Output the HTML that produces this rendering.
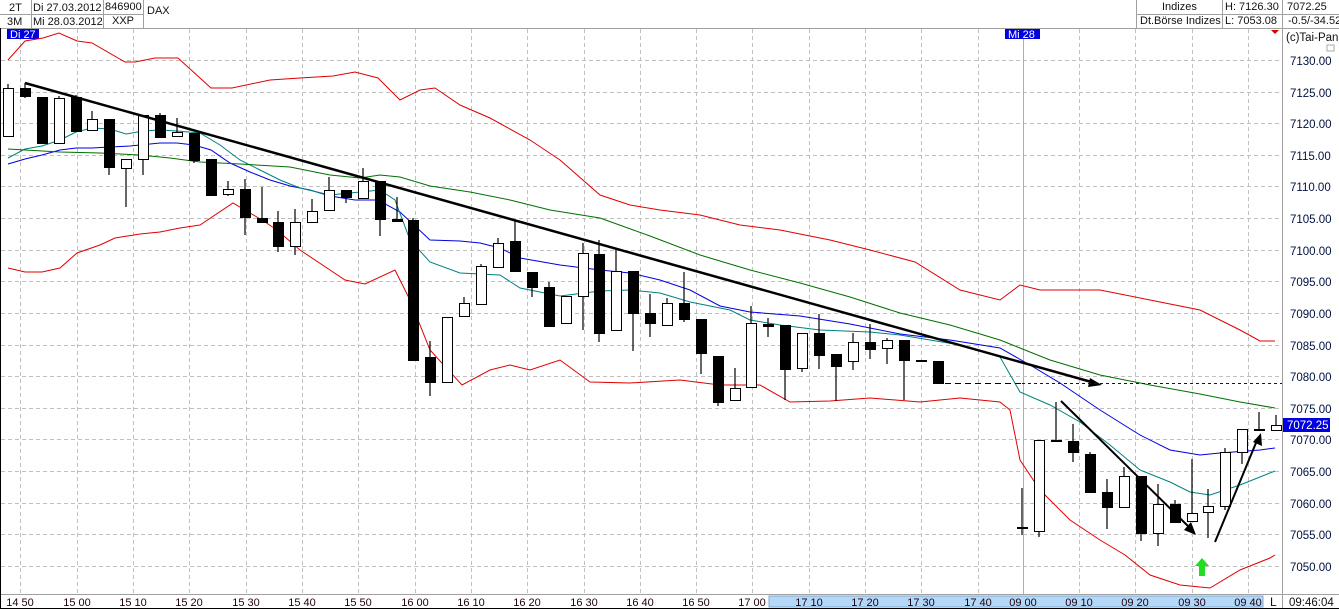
<!DOCTYPE html>
<html><head><meta charset="utf-8"><style>
body{margin:0;width:1339px;height:609px;overflow:hidden;background:#fff;font-family:"Liberation Sans",sans-serif}
svg{display:block}
text{font-family:"Liberation Sans",sans-serif}
</style></head><body>
<svg width="1339" height="609" viewBox="0 0 1339 609" xmlns="http://www.w3.org/2000/svg">
<rect width="1339" height="609" fill="#fff"/>
<g stroke="#a0a0a0" stroke-width="1" fill="none">
<line x1="0" y1="28.5" x2="1339" y2="28.5"/>
<line x1="0" y1="14.5" x2="143" y2="14.5"/>
<line x1="1136" y1="14.5" x2="1339" y2="14.5"/>
<line x1="31.5" y1="0" x2="31.5" y2="28"/>
<line x1="103.5" y1="0" x2="103.5" y2="28"/>
<line x1="143.5" y1="0" x2="143.5" y2="28"/>
<line x1="1136.5" y1="0" x2="1136.5" y2="28"/>
<line x1="1222.5" y1="0" x2="1222.5" y2="28"/>
<line x1="1282.5" y1="0" x2="1282.5" y2="609"/>
<line x1="0" y1="594.5" x2="1339" y2="594.5"/>
</g>
<line x1="0.5" y1="28" x2="0.5" y2="609" stroke="#000"/>
<line x1="0" y1="608.5" x2="1339" y2="608.5" stroke="#000"/>
<g font-size="11" fill="#111">
<text x="9" y="11">2T</text><text x="7" y="25">3M</text>
<text x="33" y="11">Di 27.03.2012</text><text x="33" y="25">Mi 28.03.2012</text>
<text x="105" y="10">846900</text><text x="112" y="24">XXP</text>
<text x="147" y="14">DAX</text>
<text x="1162" y="10">Indizes</text><text x="1140" y="24">Dt.Börse Indizes</text>
<text x="1225" y="10">H: 7126.30</text><text x="1225" y="24">L: 7053.08</text>
<text x="1287" y="10">7072.25</text><text x="1288" y="24">-0.5/-34.52</text>
</g>
<g stroke="#c0c0c0" stroke-dasharray="4,3" stroke-width="1">
<line x1="1" y1="60.5" x2="1282" y2="60.5"/><line x1="1" y1="92.5" x2="1282" y2="92.5"/><line x1="1" y1="123.5" x2="1282" y2="123.5"/><line x1="1" y1="155.5" x2="1282" y2="155.5"/><line x1="1" y1="186.5" x2="1282" y2="186.5"/><line x1="1" y1="218.5" x2="1282" y2="218.5"/><line x1="1" y1="250.5" x2="1282" y2="250.5"/><line x1="1" y1="281.5" x2="1282" y2="281.5"/><line x1="1" y1="313.5" x2="1282" y2="313.5"/><line x1="1" y1="345.5" x2="1282" y2="345.5"/><line x1="1" y1="376.5" x2="1282" y2="376.5"/><line x1="1" y1="408.5" x2="1282" y2="408.5"/><line x1="1" y1="439.5" x2="1282" y2="439.5"/><line x1="1" y1="471.5" x2="1282" y2="471.5"/><line x1="1" y1="503.5" x2="1282" y2="503.5"/><line x1="1" y1="534.5" x2="1282" y2="534.5"/><line x1="1" y1="566.5" x2="1282" y2="566.5"/>
<line x1="20.5" y1="29" x2="20.5" y2="594"/><line x1="77.5" y1="29" x2="77.5" y2="594"/><line x1="133.5" y1="29" x2="133.5" y2="594"/><line x1="189.5" y1="29" x2="189.5" y2="594"/><line x1="246.5" y1="29" x2="246.5" y2="594"/><line x1="302.5" y1="29" x2="302.5" y2="594"/><line x1="358.5" y1="29" x2="358.5" y2="594"/><line x1="415.5" y1="29" x2="415.5" y2="594"/><line x1="471.5" y1="29" x2="471.5" y2="594"/><line x1="527.5" y1="29" x2="527.5" y2="594"/><line x1="584.5" y1="29" x2="584.5" y2="594"/><line x1="640.5" y1="29" x2="640.5" y2="594"/><line x1="696.5" y1="29" x2="696.5" y2="594"/><line x1="752.5" y1="29" x2="752.5" y2="594"/><line x1="809.5" y1="29" x2="809.5" y2="594"/><line x1="865.5" y1="29" x2="865.5" y2="594"/><line x1="921.5" y1="29" x2="921.5" y2="594"/><line x1="978.5" y1="29" x2="978.5" y2="594"/><line x1="1079.5" y1="29" x2="1079.5" y2="594"/><line x1="1135.5" y1="29" x2="1135.5" y2="594"/><line x1="1192.5" y1="29" x2="1192.5" y2="594"/><line x1="1248.5" y1="29" x2="1248.5" y2="594"/>
</g>
<line x1="1023.5" y1="29" x2="1023.5" y2="594" stroke="#b0b0b0"/>
<rect x="7" y="29" width="32" height="10" fill="#0000e0"/><text x="10" y="38" font-size="11" fill="#fff">Di 27</text>
<rect x="1005" y="29" width="35" height="10" fill="#0000e0"/><text x="1008" y="38" font-size="11" fill="#fff">Mi 28</text>
<polygon points="1271,30 1279,30 1275,34" fill="#d00"/>
<g fill="none" stroke-width="1">
<polyline stroke="#e00000" points="8,60 25,41 43,38 59,33 77,41 92,43 125,62 135,62 155,58 178,58 211,88 232,88 270,80 300,78 333,76 355,72 378,78 400,100 420,90 435,88 460,105 490,118 530,140 560,160 600,195 630,205 660,210 700,215 740,225 780,230 830,240 870,250 915,262 960,290 1000,300 1020,285 1040,290 1100,290 1150,300 1200,310 1240,330 1260,341 1275,341"/>
<polyline stroke="#e00000" points="8,268 25,272 42,272 60,268 77,253 100,245 115,238 140,234 160,232 180,228 200,225 233,203 262,220 277,230 300,250 330,270 345,280 365,284 395,270 410,300 430,350 462,385 490,370 510,365 530,370 560,360 590,382 630,383 680,380 720,385 760,385 790,402 830,401 870,398 920,402 960,398 1000,402 1010,410 1020,460 1040,490 1070,520 1100,540 1125,555 1150,575 1180,585 1210,588 1240,570 1270,558 1275,555"/>
<polyline stroke="#0000e0" points="8,164 25,159 42,155 60,150 76,148 92,148 110,147 130,146 160,143 177,143 194,145 211,150 230,163 250,172 270,180 290,186 310,190 330,196 355,200 378,200 400,212 430,240 460,241 480,243 500,248 520,258 560,265 600,270 630,273 660,280 690,290 720,306 750,312 800,316 850,324 900,334 950,340 1000,348 1030,365 1060,383 1100,410 1140,435 1170,450 1200,455 1220,453 1260,450 1275,448"/>
<polyline stroke="#008080" points="8,158 25,149 42,146 60,140 76,132 92,128 110,129 126,134 143,131 160,130 177,131 200,133 220,145 240,160 260,170 280,180 300,188 330,195 360,192 380,190 395,200 410,240 430,262 460,273 500,275 520,288 560,296 600,291 630,290 660,293 690,302 730,310 750,320 780,325 820,330 870,332 900,335 930,340 960,345 1000,357 1020,392 1050,405 1080,422 1110,445 1140,470 1170,482 1190,492 1210,495 1240,485 1275,471"/>
<polyline stroke="#007000" points="8,149 25,150 60,152 100,153 140,155 170,158 200,162 240,164 290,167 330,175 360,178 380,175 400,177 430,186 470,192 510,200 550,210 600,218 650,236 700,255 750,270 800,283 850,297 900,313 950,325 1000,340 1050,360 1100,375 1150,385 1200,394 1240,402 1275,408"/>
</g>
<g stroke="#000" stroke-width="1.2">
<line x1="8" y1="84" x2="8" y2="137"/><line x1="25" y1="83" x2="25" y2="98"/><line x1="42" y1="97" x2="42" y2="143"/><line x1="59" y1="96" x2="59" y2="144"/><line x1="76" y1="95" x2="76" y2="131"/><line x1="92" y1="111" x2="92" y2="130"/><line x1="109" y1="119" x2="109" y2="175"/><line x1="126" y1="159" x2="126" y2="207"/><line x1="143" y1="115" x2="143" y2="175"/><line x1="160" y1="113" x2="160" y2="137"/><line x1="177" y1="118" x2="177" y2="136"/><line x1="194" y1="133" x2="194" y2="163"/><line x1="211" y1="159" x2="211" y2="195"/><line x1="228" y1="181" x2="228" y2="196"/><line x1="245" y1="179" x2="245" y2="235"/><line x1="262" y1="187" x2="262" y2="222"/><line x1="278" y1="211" x2="278" y2="252"/><line x1="295" y1="209" x2="295" y2="255"/><line x1="312" y1="199" x2="312" y2="223"/><line x1="329" y1="177" x2="329" y2="210"/><line x1="346" y1="190" x2="346" y2="203"/><line x1="363" y1="168" x2="363" y2="198"/><line x1="380" y1="181" x2="380" y2="236"/><line x1="397" y1="197" x2="397" y2="221"/><line x1="413" y1="218" x2="413" y2="360"/><line x1="430" y1="341" x2="430" y2="396"/><line x1="447" y1="317" x2="447" y2="382"/><line x1="464" y1="297" x2="464" y2="316"/><line x1="481" y1="264" x2="481" y2="304"/><line x1="498" y1="238" x2="498" y2="268"/><line x1="515" y1="221" x2="515" y2="271"/><line x1="532" y1="272" x2="532" y2="297"/><line x1="549" y1="282" x2="549" y2="326"/><line x1="566" y1="296" x2="566" y2="323"/><line x1="583" y1="243" x2="583" y2="330"/><line x1="599" y1="240" x2="599" y2="342"/><line x1="616" y1="248" x2="616" y2="330"/><line x1="633" y1="271" x2="633" y2="351"/><line x1="650" y1="294" x2="650" y2="337"/><line x1="667" y1="298" x2="667" y2="325"/><line x1="684" y1="272" x2="684" y2="322"/><line x1="701" y1="319" x2="701" y2="374"/><line x1="718" y1="356" x2="718" y2="406"/><line x1="735" y1="368" x2="735" y2="400"/><line x1="751" y1="306" x2="751" y2="387"/><line x1="768" y1="318" x2="768" y2="337"/><line x1="785" y1="325" x2="785" y2="400"/><line x1="802" y1="333" x2="802" y2="372"/><line x1="819" y1="314" x2="819" y2="369"/><line x1="836" y1="354" x2="836" y2="401"/><line x1="853" y1="333" x2="853" y2="370"/><line x1="870" y1="324" x2="870" y2="359"/><line x1="887" y1="338" x2="887" y2="364"/><line x1="904" y1="340" x2="904" y2="400"/><line x1="938" y1="361" x2="938" y2="383"/>
<line x1="1022" y1="488" x2="1022" y2="535"/><line x1="1039" y1="440" x2="1039" y2="537"/><line x1="1056" y1="402" x2="1056" y2="441"/><line x1="1073" y1="424" x2="1073" y2="462"/><line x1="1090" y1="452" x2="1090" y2="492"/><line x1="1107" y1="479" x2="1107" y2="529"/><line x1="1124" y1="467" x2="1124" y2="507"/><line x1="1141" y1="476" x2="1141" y2="541"/><line x1="1158" y1="484" x2="1158" y2="546"/><line x1="1175" y1="500" x2="1175" y2="522"/><line x1="1192" y1="459" x2="1192" y2="521"/><line x1="1208" y1="489" x2="1208" y2="538"/><line x1="1225" y1="448" x2="1225" y2="510"/><line x1="1242" y1="429" x2="1242" y2="464"/><line x1="1259" y1="412" x2="1259" y2="430"/><line x1="1276" y1="415" x2="1276" y2="430"/>
</g>
<g stroke="#000" stroke-width="1">
<g fill="#fff">
<rect x="3.5" y="88.5" width="10" height="48"/><rect x="54.5" y="98.5" width="10" height="45"/><rect x="87.5" y="119.5" width="10" height="11"/><rect x="121.5" y="159.5" width="10" height="9"/><rect x="138.5" y="115.5" width="10" height="44"/><rect x="172.5" y="132.5" width="10" height="4"/><rect x="223.5" y="189.5" width="10" height="5"/><rect x="290.5" y="222.5" width="10" height="24"/><rect x="307.5" y="211.5" width="10" height="11"/><rect x="324.5" y="190.5" width="10" height="20"/><rect x="358.5" y="181.5" width="10" height="17"/>
<rect x="442.5" y="317.5" width="10" height="65"/><rect x="459.5" y="303.5" width="10" height="13"/><rect x="476.5" y="266.5" width="10" height="38"/><rect x="493.5" y="243.5" width="10" height="24"/><rect x="561.5" y="296.5" width="10" height="27"/><rect x="578.5" y="253.5" width="10" height="43"/><rect x="611.5" y="271.5" width="10" height="59"/><rect x="662.5" y="303.5" width="10" height="22"/><rect x="730.5" y="388.5" width="10" height="12"/><rect x="746.5" y="323.5" width="10" height="64"/><rect x="797.5" y="333.5" width="10" height="35"/><rect x="848.5" y="342.5" width="10" height="19"/><rect x="882.5" y="340.5" width="10" height="8"/>
<rect x="1034.5" y="440.5" width="10" height="91"/><rect x="1119.5" y="476.5" width="10" height="31"/><rect x="1153.5" y="504.5" width="10" height="29"/><rect x="1187.5" y="513.5" width="10" height="8"/><rect x="1203.5" y="506.5" width="10" height="6"/><rect x="1220.5" y="452.5" width="10" height="54"/><rect x="1237.5" y="429.5" width="10" height="23"/><rect x="1271.5" y="425.5" width="10" height="5"/>
</g>
<g fill="#000">
<rect x="20.5" y="88.5" width="10" height="8"/><rect x="37.5" y="97.5" width="10" height="46"/><rect x="71.5" y="97.5" width="10" height="34"/><rect x="104.5" y="119.5" width="10" height="48"/><rect x="155.5" y="115.5" width="10" height="22"/><rect x="189.5" y="133.5" width="10" height="27"/><rect x="206.5" y="159.5" width="10" height="36"/><rect x="240.5" y="189.5" width="10" height="28"/><rect x="257.5" y="218.5" width="10" height="4"/><rect x="273.5" y="222.5" width="10" height="24"/><rect x="341.5" y="190.5" width="10" height="7"/><rect x="375.5" y="181.5" width="10" height="38"/><rect x="392.5" y="219.5" width="10" height="2"/>
<rect x="408.5" y="220.5" width="10" height="140"/><rect x="425.5" y="357.5" width="10" height="25"/><rect x="510.5" y="241.5" width="10" height="30"/><rect x="527.5" y="272.5" width="10" height="15"/><rect x="544.5" y="287.5" width="10" height="39"/><rect x="594.5" y="254.5" width="10" height="79"/><rect x="628.5" y="271.5" width="10" height="42"/><rect x="645.5" y="313.5" width="10" height="10"/><rect x="679.5" y="303.5" width="10" height="16"/><rect x="696.5" y="319.5" width="10" height="34"/><rect x="713.5" y="356.5" width="10" height="46"/><rect x="763.5" y="324.5" width="10" height="2"/><rect x="780.5" y="325.5" width="10" height="44"/><rect x="814.5" y="333.5" width="10" height="22"/><rect x="831.5" y="354.5" width="10" height="12"/><rect x="865.5" y="342.5" width="10" height="7"/><rect x="899.5" y="340.5" width="10" height="20"/><rect x="916.5" y="360.5" width="10" height="1"/><rect x="933.5" y="361.5" width="10" height="22"/>
<rect x="1017.5" y="527.5" width="10" height="1"/><rect x="1051.5" y="440.5" width="10" height="1"/><rect x="1068.5" y="441.5" width="10" height="11"/><rect x="1085.5" y="454.5" width="10" height="38"/><rect x="1102.5" y="492.5" width="10" height="15"/><rect x="1136.5" y="476.5" width="10" height="57"/><rect x="1170.5" y="504.5" width="10" height="18"/><rect x="1254.5" y="429.5" width="10" height="1"/>
</g>
</g>
<line x1="25" y1="83" x2="1095" y2="383" stroke="#000" stroke-width="2.5"/>
<polygon points="1102,385 1090,378 1088,387" fill="#000"/>
<line x1="945" y1="383.5" x2="1022" y2="383.5" stroke="#000" stroke-dasharray="6,4"/>
<line x1="1022" y1="383.5" x2="1282" y2="383.5" stroke="#0000d0" stroke-dasharray="3,3"/>
<line x1="1061" y1="401" x2="1192" y2="530" stroke="#000" stroke-width="2"/>
<polygon points="1196,535 1184,530 1191,522" fill="#000"/>
<line x1="1215" y1="542" x2="1258" y2="438" stroke="#000" stroke-width="2"/>
<polygon points="1261,433 1262,446 1253,442" fill="#000"/>
<polygon points="1202,558 1209,566 1205,566 1205,576 1199,576 1199,566 1195,566" fill="#22dd22"/>
<text x="1286" y="41" font-size="11.5" fill="#111">(c)Tai-Pan</text>
<rect x="1327" y="45" width="7" height="6" fill="none" stroke="#aaa"/>
<g font-size="11.5" fill="#001040">
<text x="1290" y="65">7130.00</text><text x="1290" y="97">7125.00</text><text x="1290" y="128">7120.00</text><text x="1290" y="160">7115.00</text><text x="1290" y="191">7110.00</text><text x="1290" y="223">7105.00</text><text x="1290" y="255">7100.00</text><text x="1290" y="286">7095.00</text><text x="1290" y="318">7090.00</text><text x="1290" y="350">7085.00</text><text x="1290" y="381">7080.00</text><text x="1290" y="413">7075.00</text><text x="1290" y="444">7070.00</text><text x="1290" y="476">7065.00</text><text x="1290" y="508">7060.00</text><text x="1290" y="539">7055.00</text><text x="1290" y="571">7050.00</text>
</g>
<rect x="1283" y="418" width="47" height="14" fill="#0000e0"/>
<text x="1287" y="429" font-size="11.5" fill="#fff">7072.25</text>
<rect x="769" y="596" width="494" height="11" fill="#b4d8f8" stroke="#80a8d0"/>
<g font-size="11" fill="#200010" text-anchor="middle">
<text x="20" y="606">14 50</text><text x="77" y="606">15 00</text><text x="133" y="606">15 10</text><text x="189" y="606">15 20</text><text x="246" y="606">15 30</text><text x="302" y="606">15 40</text><text x="358" y="606">15 50</text><text x="415" y="606">16 00</text><text x="471" y="606">16 10</text><text x="527" y="606">16 20</text><text x="584" y="606">16 30</text><text x="640" y="606">16 40</text><text x="696" y="606">16 50</text><text x="752" y="606">17 00</text><text x="809" y="606">17 10</text><text x="865" y="606">17 20</text><text x="921" y="606">17 30</text><text x="978" y="606">17 40</text><text x="1023" y="606">09 00</text><text x="1079" y="606">09 10</text><text x="1135" y="606">09 20</text><text x="1192" y="606">09 30</text><text x="1248" y="606">09 40</text>
</g>
<text x="1270" y="606" font-size="12" fill="#111">L</text>
<text x="1289" y="606" font-size="11.5" fill="#111">09:46:04</text>
</svg>
</body></html>
